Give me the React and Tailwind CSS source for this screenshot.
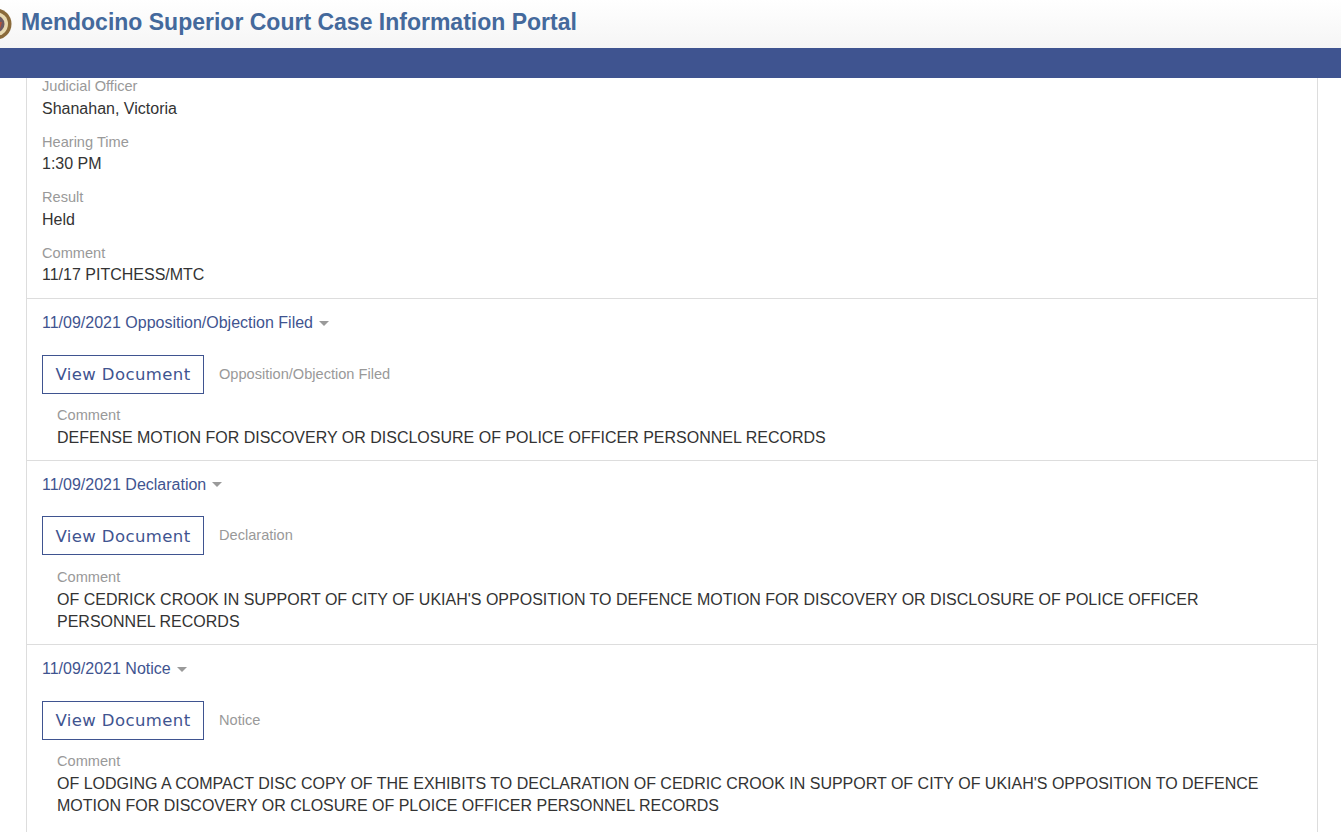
const Field = ({ label, value, className = '' }) => (
  <div className={`mb-[10.5px] ${className}`}>
    <div className="text-[14.6px] leading-[22.5px] text-[#999999]">{label}</div>
    <div className="text-[16px] leading-[22.5px] text-[#333333]">{value}</div>
  </div>
);

const Logo = () => (
  <svg width="32" height="40" viewBox="0 0 32 40" className="ml-[-20px] shrink-0">
    <circle cx="16" cy="20" r="15.5" fill="#8a6a3a" />
    <circle cx="16" cy="20" r="12" fill="#e8d9b0" />
    <circle cx="16" cy="20" r="8.5" fill="#6b5a62" />
    <path d="M10 18h12l-2 7h-8z" fill="#b5533c" />
    <path d="M12 14h8v4h-8z" fill="#d8c8a8" />
  </svg>
);

const Entry = ({ title, doc, comment }) => (
  <section className="border-t border-[#dddddd] px-[15px] pt-[12px]">
    <div className="flex items-center text-[16px] leading-[23px] text-[#3f5490]">
      <span>{title}</span>
      <span className="ml-[6px] mt-[1px] h-0 w-0 border-x-[5px] border-t-[5px] border-x-transparent border-t-[#9a9a9a]" />
    </div>
    <div className="mt-[20.6px] flex items-center">
      <button className="h-[39px] w-[162px] border border-[#3f5490] pt-[2px] font-['DejaVu_Sans',sans-serif] text-[16.5px] tracking-[0.4px] text-[#3f5490]">
        View Document
      </button>
      <span className="ml-[15px] mt-px text-[14.6px] text-[#999999]">{doc}</span>
    </div>
    <div className="mt-[10.7px] px-[15px]">
      <Field label="Comment" value={comment} />
    </div>
  </section>
);

export default function App() {
  return (
    <div className="flex h-[832px] flex-col overflow-hidden bg-white font-['Liberation_Sans',Arial,sans-serif]">
      <header className="flex h-[48px] shrink-0 items-center gap-[9px] bg-gradient-to-b from-white to-[#f5f5f5]">
        <Logo />
        <h1 className="pb-[3px] text-[23px] font-bold text-[#44699c]">Mendocino Superior Court Case Information Portal</h1>
      </header>
      <div className="h-[30px] shrink-0 bg-[#3f5490]" />
      <main className="ml-[26px] mr-[23px] min-h-0 flex-1 overflow-hidden border-x border-[#dddddd]">
        <div className="-mt-[2.6px] px-[15px] pb-[0.6px]">
          <Field label="Judicial Officer" value="Shanahan, Victoria" />
          <Field label="Hearing Time" value="1:30 PM" />
          <Field label="Result" value="Held" />
          <Field label="Comment" value="11/17 PITCHESS/MTC" />
        </div>
        <Entry
          title="11/09/2021 Opposition/Objection Filed"
          doc="Opposition/Objection Filed"
          comment="DEFENSE MOTION FOR DISCOVERY OR DISCLOSURE OF POLICE OFFICER PERSONNEL RECORDS"
        />
        <Entry
          title="11/09/2021 Declaration"
          doc="Declaration"
          comment="OF CEDRICK CROOK IN SUPPORT OF CITY OF UKIAH'S OPPOSITION TO DEFENCE MOTION FOR DISCOVERY OR DISCLOSURE OF POLICE OFFICER PERSONNEL RECORDS"
        />
        <Entry
          title="11/09/2021 Notice"
          doc="Notice"
          comment="OF LODGING A COMPACT DISC COPY OF THE EXHIBITS TO DECLARATION OF CEDRIC CROOK IN SUPPORT OF CITY OF UKIAH'S OPPOSITION TO DEFENCE MOTION FOR DISCOVERY OR CLOSURE OF PLOICE OFFICER PERSONNEL RECORDS"
        />
      </main>
    </div>
  );
}
